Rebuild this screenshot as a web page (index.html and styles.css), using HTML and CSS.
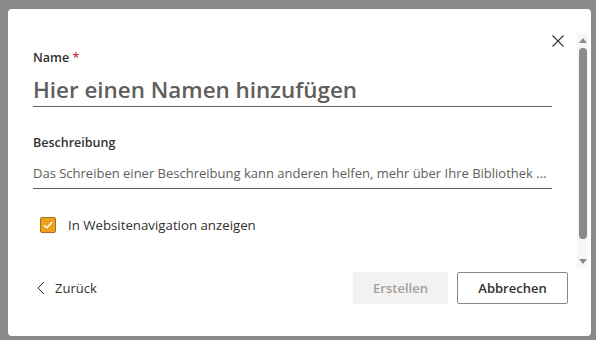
FILE: index.html
```html
<!DOCTYPE html>
<html lang="de">
<head>
    <meta charset="UTF-8">
    <meta name="viewport" content="width=device-width, initial-scale=1.0">
    <link rel="stylesheet" href="styles.css">
    <title>Liste erstellen</title>
</head>
<body>
    <div class="dialog">
        <div class="oben">
            <main class="inhalt">
                <div class="kopf">
                    <button class="schliessen" aria-label="Schließen">
                        <svg width="12" height="12" viewBox="0 0 12 12"><path d="M0.5 0.5 L11.5 11.5 M11.5 0.5 L0.5 11.5" stroke="#323130" stroke-width="1.1" fill="none"/></svg>
                    </button>
                </div>
                <div class="feld">
                    <label class="infs" for="name">Name <span class="pflicht">*</span></label>
                    <div class="eingabe gross" id="name">Hier einen Namen hinzufügen</div>
                </div>
                <div class="feld">
                    <label class="infs" for="besch">Beschreibung</label>
                    <div class="eingabe klein" id="besch">Das Schreiben einer Beschreibung kann anderen helfen, mehr über Ihre Bibliothek ...</div>
                </div>
                <div class="auswahl">
                    <span class="haken">
                        <svg width="10" height="8" viewBox="0 0 10 8"><path d="M1 4.2 L3.8 6.8 L9 1.2" stroke="#fff" stroke-width="1.4" fill="none"/></svg>
                    </span>
                    <span>In Websitenavigation anzeigen</span>
                </div>
            </main>
            <div class="leiste">
                <span class="pfeil hoch"></span>
                <span class="daumen"></span>
                <span class="pfeil runter"></span>
            </div>
        </div>
        <footer class="fuss">
            <button class="zurueck">
                <svg width="8" height="14" viewBox="0 0 8 14"><path d="M7 1 L1 7 L7 13" stroke="#323130" stroke-width="1" fill="none"/></svg>
                Zurück
            </button>
            <div class="knoepfe">
                <button class="btt aus">Erstellen</button>
                <button class="btt rand">Abbrechen</button>
            </div>
        </footer>
    </div>
</body>
</html>
```

FILE: styles.css
```css
body {
    margin: 0;
    padding: 9px 5px 4px 8px;
    background: #8a8a8a;
    font-family: 'Open Sans', sans-serif;
    color: #323130;
    height: 340px;
    box-sizing: border-box;
}

.dialog {
    width: 583px;
    height: 327px;
    background: #fff;
    border-radius: 4px;
    display: flex;
    flex-direction: column;
    box-sizing: border-box;
}

.oben {
    display: flex;
    height: 259px;
}

.inhalt {
    flex: 1;
    padding: 23px 25px 0 25px;
}

.kopf {
    display: flex;
    justify-content: flex-end;
    margin-right: -12px;
    height: 16px;
}

.schliessen {
    border: none;
    background: none;
    padding: 3px 0 0 0;
    width: 12px;
    height: 16px;
    cursor: pointer;
}

.feld + .feld {
    margin-top: 26px;
}

.infs {
    display: block;
    font-size: 12.5px;
    font-weight: 600;
    line-height: 20px;
}

.pflicht {
    color: #d13438;
}

.eingabe {
    border-bottom: 1px solid #605e5c;
    color: #605e5c;
    white-space: nowrap;
    overflow: hidden;
}

.gross {
    font-size: 22.4px;
    font-weight: 600;
    line-height: 33px;
    height: 33px;
    margin-top: 5px;
}

.klein {
    font-size: 13px;
    line-height: 20px;
    padding: 4px 0 5px;
    margin-top: 6px;
}

.auswahl {
    display: flex;
    align-items: center;
    gap: 12px;
    margin-top: 27px;
    margin-left: 7px;
    font-size: 13.25px;
}

.haken {
    width: 16px;
    height: 16px;
    border-radius: 2px;
    background: #eea21c;
    border: 1px solid #a7731a;
    box-sizing: border-box;
    display: flex;
    align-items: center;
    justify-content: center;
}

.leiste {
    width: 11px;
    margin: 24px 3px 0 0;
    background: #f7f7f7;
    display: flex;
    flex-direction: column;
    align-items: center;
}

.pfeil {
    width: 0;
    height: 0;
    border-left: 4px solid transparent;
    border-right: 4px solid transparent;
    margin: 4px 0;
}

.hoch {
    border-bottom: 5px solid #8a8a8a;
    margin-top: 5px;
}

.runter {
    border-top: 5px solid #8a8a8a;
    margin-bottom: 4px;
}

.daumen {
    flex: 1;
    width: 8px;
    border-radius: 4px;
    background: #8a8a8a;
    margin: 1px 0 16px;
}

.fuss {
    display: flex;
    justify-content: space-between;
    align-items: center;
    padding: 4px 23px 0 29px;
    height: 32px;
}

.zurueck {
    border: none;
    background: none;
    font-family: inherit;
    font-size: 13px;
    color: #323130;
    display: flex;
    align-items: center;
    gap: 10px;
    padding: 0;
    cursor: pointer;
}

.knoepfe {
    display: flex;
    gap: 9px;
}

.btt {
    height: 32px;
    font-family: inherit;
    font-size: 13px;
    font-weight: 600;
    border-radius: 2px;
    cursor: pointer;
}

.aus {
    width: 95px;
    background: #f3f2f1;
    border: none;
    color: #a19f9d;
}

.rand {
    width: 111px;
    background: #fff;
    border: 1px solid #8a8886;
    color: #323130;
}
```
